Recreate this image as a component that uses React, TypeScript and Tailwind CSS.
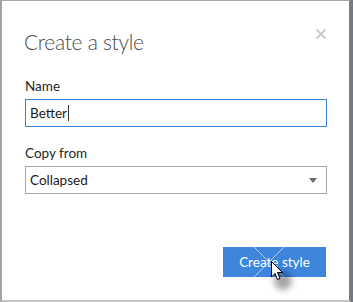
import React from "react";

const font = { fontFamily: 'Lato, "Open Sans", "Liberation Sans", sans-serif' };

export default function App() {
  return (
    <div className="w-[353px] h-[302px] bg-[#6f7a86] overflow-hidden" style={font}>
      <div className="relative w-[351px] h-[302px] border-l-2 border-t border-r-2 border-b-2 border-l-[#a3a3a3] border-t-[#a8a8a8] border-r-[#7d7d7d] border-b-[#c4c4c4] bg-white">
        {/* header */}
        <div className="flex items-start justify-between pl-[22px] pr-[23px] pt-[27px]">
          <h1 className="text-[21px] font-light leading-[28px] tracking-[-0.3px] text-[#4a4a4a]">
            Create a style
          </h1>
          <svg className="mt-[1px]" width="10" height="10" viewBox="0 0 10 10">
            <path d="M0.5 0.5 L9.5 9.5 M9.5 0.5 L0.5 9.5" stroke="#cccccc" strokeWidth="2" />
          </svg>
        </div>

        {/* form */}
        <div className="flex flex-col px-[23px] pt-[21px]">
          <label className="text-[13.5px] leading-[18px] text-[#262626]">Name</label>
          <div className="mt-[4px] h-[28px] w-[302px] border border-[#3b84d8] flex items-center pl-[4px] text-[13.5px] text-[#1a1a1a]">
            Better
            <span className="ml-[1px] inline-block w-[1px] h-[16px] bg-[#333]" />
          </div>

          <label className="mt-[17px] text-[13.5px] leading-[18px] text-[#262626]">Copy from</label>
          <div className="mt-[4px] h-[28px] w-[302px] border border-[#ababab] flex items-center justify-between pl-[4px] pr-[9px] text-[13.5px] text-[#1a1a1a]">
            <span>Collapsed</span>
            <svg width="8" height="5" viewBox="0 0 8 5">
              <path d="M0 0 H8 L4 5 Z" fill="#6b6b6b" />
            </svg>
          </div>
        </div>

        {/* footer */}
        <div className="flex justify-end pr-[23px] pt-[53px]">
          <button className="relative h-[30px] w-[103px] bg-[#3d86dc] text-white text-[13.5px] leading-[30px] overflow-hidden">
            Create style
            <svg className="absolute left-0 top-0" width="103" height="30" viewBox="0 0 103 30">
              <path d="M31 0 L61 30 M61 0 L31 30" stroke="#cfe1f7" strokeWidth="1" opacity="0.8" />
            </svg>
          </button>
        </div>

        {/* mouse pointer */}
        <div className="absolute left-[269px] top-[260px]">
          <div className="absolute left-[3px] top-[11px] w-[18px] h-[18px] rounded-full bg-black/35 blur-[3px]" />
          <svg className="relative" width="13" height="20" viewBox="0 0 13 20">
            <path d="M0.5 0.5 V16 L4 12.5 L6.5 18.5 L9 17.5 L6.5 11.5 H11.5 Z" fill="#fff" stroke="#000" strokeWidth="1" />
          </svg>
        </div>
      </div>
    </div>
  );
}
